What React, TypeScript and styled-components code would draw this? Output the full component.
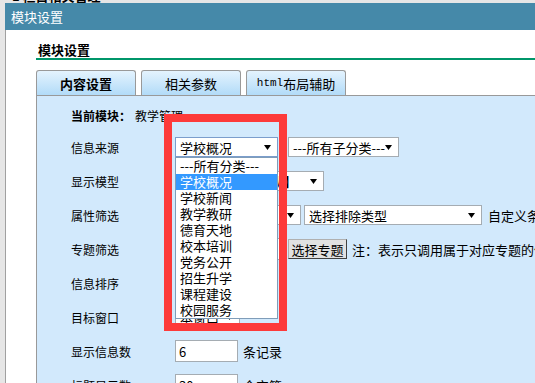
import styled, { createGlobalStyle } from 'styled-components';

const GlobalStyle = createGlobalStyle`
  html, body {
    margin: 0;
    padding: 0;
  }
  body {
    width: 535px;
    height: 383px;
    overflow: hidden;
    background: #e6e6e6;
    font-family: "Noto Sans CJK SC", "Noto Sans", sans-serif;
    font-size: 12px;
    color: #000;
  }
`;

const Page = styled.div`
  position: relative;
  width: 535px;
  height: 383px;
  overflow: hidden;
`;

const BackStrip = styled.div`
  height: 3px;
  overflow: hidden;
  padding-left: 12px;
`;

const BackTitle = styled.div`
  margin-top: -11px;
  font-size: 13px;
  font-weight: bold;
  line-height: 14px;
  white-space: nowrap;
`;

const Dialog = styled.div`
  width: 800px;
  margin-left: 5px;
`;

const TitleBar = styled.div`
  display: flex;
  align-items: center;
  height: 27px;
  padding-left: 6px;
  background: #4589a9;
  color: #fff;
  font-size: 13px;
`;

const DialogBody = styled.div`
  border-left: 1px solid #a0a0a0;
  background: #fff;
  padding: 12px 0 0 30px;
`;

const Heading = styled.div`
  padding-left: 2px;
  font-size: 13px;
  font-weight: bold;
  line-height: 16px;
  border-bottom: 2px solid #00966a;
`;

const TabBar = styled.div`
  display: flex;
  gap: 5px;
  margin-top: 10px;
`;

const Tab = styled.div<{ $active?: boolean }>`
  box-sizing: border-box;
  width: 100px;
  height: 25px;
  display: flex;
  align-items: center;
  justify-content: center;
  border: 1px solid #999;
  border-bottom: none;
  border-radius: 3px 3px 0 0;
  background: linear-gradient(#e4f3fe, #b2dbf8);
  font-size: 13px;
  font-weight: ${p => (p.$active ? 'bold' : 'normal')};
  white-space: nowrap;
`;

const Mono = styled.span`
  font-family: "Liberation Mono", monospace;
  font-size: 11px;
`;

const Panel = styled.div`
  border: 1px solid #999;
  background: #d2e9fc;
  padding: 4px 0 0 34px;
  height: 400px;
`;

const Row = styled.div<{ $h?: number }>`
  display: flex;
  align-items: center;
  height: ${p => p.$h ?? 34}px;
  white-space: nowrap;
`;

const Label = styled.div`
  width: 104px;
  flex-shrink: 0;
`;

const Current = styled.span`
  font-weight: bold;
`;

const CurrentValue = styled.span`
  margin-left: 4px;
`;

const Controls = styled.div<{ $gap?: number }>`
  display: flex;
  align-items: center;
  gap: ${p => p.$gap ?? 5}px;
`;

const SelectBox = styled.div<{ $w: number; $focus?: boolean }>`
  position: relative;
  box-sizing: border-box;
  display: flex;
  align-items: center;
  justify-content: space-between;
  width: ${p => p.$w}px;
  height: 20px;
  padding: 0 6px 0 4px;
  border: 1px solid ${p => (p.$focus ? '#7b9dcc' : '#a5acb2')};
  background: #fff;
  font-size: 13px;
`;

const SelectText = styled.span`
  overflow: hidden;
`;

const DropList = styled.ul`
  position: absolute;
  z-index: 5;
  top: calc(100% + 1px);
  left: -1px;
  right: -1px;
  margin: 0;
  padding: 0;
  list-style: none;
  border: 1px solid #7f9db9;
  background: #fff;
`;

const Option = styled.li<{ $selected?: boolean }>`
  height: 16px;
  line-height: 16px;
  padding-left: 4px;
  font-size: 13px;
  background: ${p => (p.$selected ? '#3399ff' : 'transparent')};
  color: ${p => (p.$selected ? '#fff' : '#000')};
`;

const TextInput = styled.div<{ $w: number }>`
  box-sizing: border-box;
  display: flex;
  align-items: center;
  width: ${p => p.$w}px;
  height: 22px;
  padding-left: 3px;
  border: 1px solid #a5acb2;
  background: #fff;
  font-size: 13px;
`;

const Button = styled.div`
  box-sizing: border-box;
  display: flex;
  align-items: center;
  justify-content: center;
  width: 59px;
  height: 20px;
  border: 1px solid;
  border-color: #b0b0b0 #404040 #404040 #b0b0b0;
  background: #e1e1e1;
  font-size: 13px;
`;

const Note = styled.span`
  font-size: 13px;
`;

const Annotation = styled.div`
  position: absolute;
  left: 164px;
  top: 114px;
  width: 123px;
  height: 217px;
  box-sizing: border-box;
  border: 8px solid #fd3a3a;
  pointer-events: none;
`;

const Arrow = () => (
  <svg width="7" height="5" viewBox="0 0 7 5">
    <polygon points="0,0 7,0 3.5,5" fill="#000" />
  </svg>
);

const sources = ['---所有分类---', '学校概况', '学校新闻', '教学教研', '德育天地', '校本培训', '党务公开', '招生升学', '课程建设', '校园服务'];

interface SelectProps {
  width: number;
  text: string;
  focus?: boolean;
  options?: string[];
  selected?: number;
}

const Select = ({ width, text, focus, options, selected }: SelectProps) => (
  <SelectBox $w={width} $focus={focus}>
    <SelectText>{text}</SelectText>
    <Arrow />
    {options && (
      <DropList>
        {options.map((o, i) => (
          <Option key={o} $selected={i === selected}>{o}</Option>
        ))}
      </DropList>
    )}
  </SelectBox>
);

const App = () => {
  return (
    <Page>
      <GlobalStyle />
      <BackStrip>
        <BackTitle>1 栏目相关管理</BackTitle>
      </BackStrip>
      <Dialog>
        <TitleBar>模块设置</TitleBar>
        <DialogBody>
          <Heading>模块设置</Heading>
          <TabBar>
            <Tab $active>内容设置</Tab>
            <Tab>相关参数</Tab>
            <Tab><Mono>html</Mono>布局辅助</Tab>
          </TabBar>
          <Panel>
            <Row $h={30}>
              <Current>当前模块：</Current>
              <CurrentValue>教学管理</CurrentValue>
            </Row>
            <Row>
              <Label>信息来源</Label>
              <Controls $gap={10}>
                <Select width={103} text="学校概况" focus options={sources} selected={1} />
                <Select width={111} text="---所有子分类---" />
              </Controls>
            </Row>
            <Row>
              <Label>显示模型</Label>
              <Select width={149} text="标题列表式【默认】" />
            </Row>
            <Row>
              <Label>属性筛选</Label>
              <Controls $gap={3}>
                <Select width={126} text="选择属性类型" />
                <Select width={178} text="选择排除类型" />
                <Note>&nbsp;自定义条件</Note>
              </Controls>
            </Row>
            <Row>
              <Label>专题筛选</Label>
              <Controls $gap={5}>
                <TextInput $w={108} />
                <Button>选择专题</Button>
                <Note>注：表示只调用属于对应专题的信息</Note>
              </Controls>
            </Row>
            <Row>
              <Label>信息排序</Label>
              <Select width={95} text="按时间降序" />
            </Row>
            <Row>
              <Label>目标窗口</Label>
              <Select width={65} text="本窗口" />
            </Row>
            <Row>
              <Label>显示信息数</Label>
              <Controls>
                <TextInput $w={63}>6</TextInput>
                <Note>条记录</Note>
              </Controls>
            </Row>
            <Row>
              <Label>标题显示数</Label>
              <Controls>
                <TextInput $w={63}>30</TextInput>
                <Note>个字符</Note>
              </Controls>
            </Row>
          </Panel>
        </DialogBody>
      </Dialog>
      <Annotation />
    </Page>
  );
};

export default App;
